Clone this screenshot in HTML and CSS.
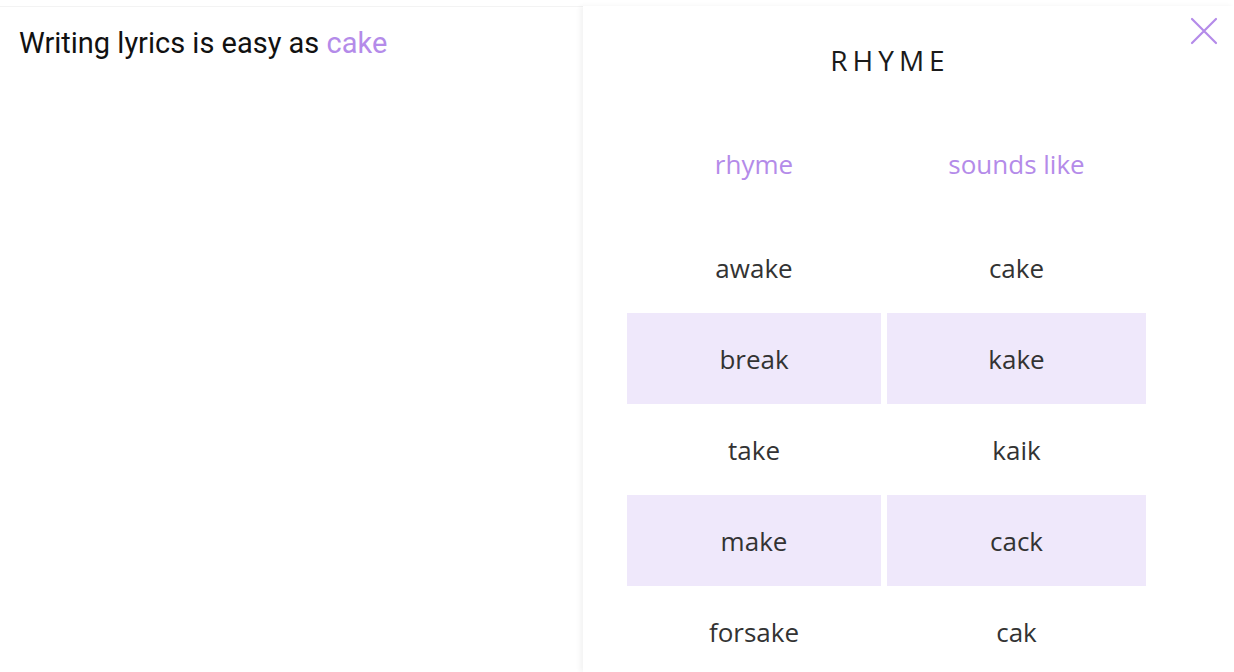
FILE: index.html
```html
<!DOCTYPE html>
<html>
<head>
<meta charset="utf-8">
<link rel="stylesheet" href="styles.css">
</head>
<body>
<div class="app">
  <div class="editor">
    <p class="line">Writing lyrics is easy as <span class="hl">cake</span></p>
  </div>
  <div class="panel">
    <button class="close" aria-label="close">
      <svg width="28" height="28" viewBox="0 0 28 28"><path d="M2 2 L26 26 M26 2 L2 26" stroke="#b48be9" stroke-width="2.2" fill="none" stroke-linecap="round"/></svg>
    </button>
    <h1 class="title">RHYME</h1>
    <div class="grid head">
      <div class="hcell">rhyme</div>
      <div class="hcell">sounds like</div>
    </div>
    <div class="grid body">
      <div class="cell">awake</div><div class="cell">cake</div>
      <div class="cell alt">break</div><div class="cell alt">kake</div>
      <div class="cell">take</div><div class="cell">kaik</div>
      <div class="cell alt">make</div><div class="cell alt">cack</div>
      <div class="cell">forsake</div><div class="cell">cak</div>
    </div>
  </div>
</div>
</body>
</html>
```
FILE: styles.css
```css
html, body {
  margin: 0;
  padding: 0;
  background: #ffffff;
  overflow: hidden;
}
.app {
  display: flex;
  height: 672px;
  padding-top: 6px;
  box-sizing: border-box;
}
.editor {
  width: 583px;
  flex: none;
  border-top: 1px solid #f3f3f3;
  box-sizing: border-box;
  padding: 0 0 0 19px;
}
.line {
  margin: 19px 0 0 0;
  font-family: Roboto, "Liberation Sans", sans-serif;
  font-size: 29px;
  line-height: 34px;
  color: #111111;
  letter-spacing: 0;
}
.hl {
  color: #b48be9;
}
.panel {
  flex: 1;
  position: relative;
  box-shadow: -3px 0 5px rgba(0, 0, 0, 0.05);
  padding-top: 38px;
  font-family: "Open Sans", "Noto Sans", sans-serif;
}
.close {
  position: absolute;
  top: 11px;
  right: 16px;
  background: none;
  border: 0;
  padding: 0;
  width: 28px;
  height: 28px;
  cursor: pointer;
}
.close svg {
  display: block;
}
.title {
  margin: 0;
  width: 609px;
  text-align: center;
  font-size: 28px;
  line-height: 32px;
  font-weight: 500;
  letter-spacing: 5px;
  text-indent: 5px;
  color: #1a1a1a;
}
.grid {
  display: grid;
  grid-template-columns: 254px 259px;
  column-gap: 6px;
  margin-left: 44px;
}
.head {
  margin-top: 46px;
  margin-bottom: 10px;
}
.hcell {
  height: 90px;
  display: flex;
  align-items: center;
  justify-content: center;
  font-size: 26px;
  color: #b48be9;
  padding-bottom: 6px;
  box-sizing: border-box;
}
.cell {
  height: 91px;
  display: flex;
  align-items: center;
  justify-content: center;
  font-size: 26px;
  color: #333333;
}
.cell.alt {
  background: #efe8fb;
}
```
